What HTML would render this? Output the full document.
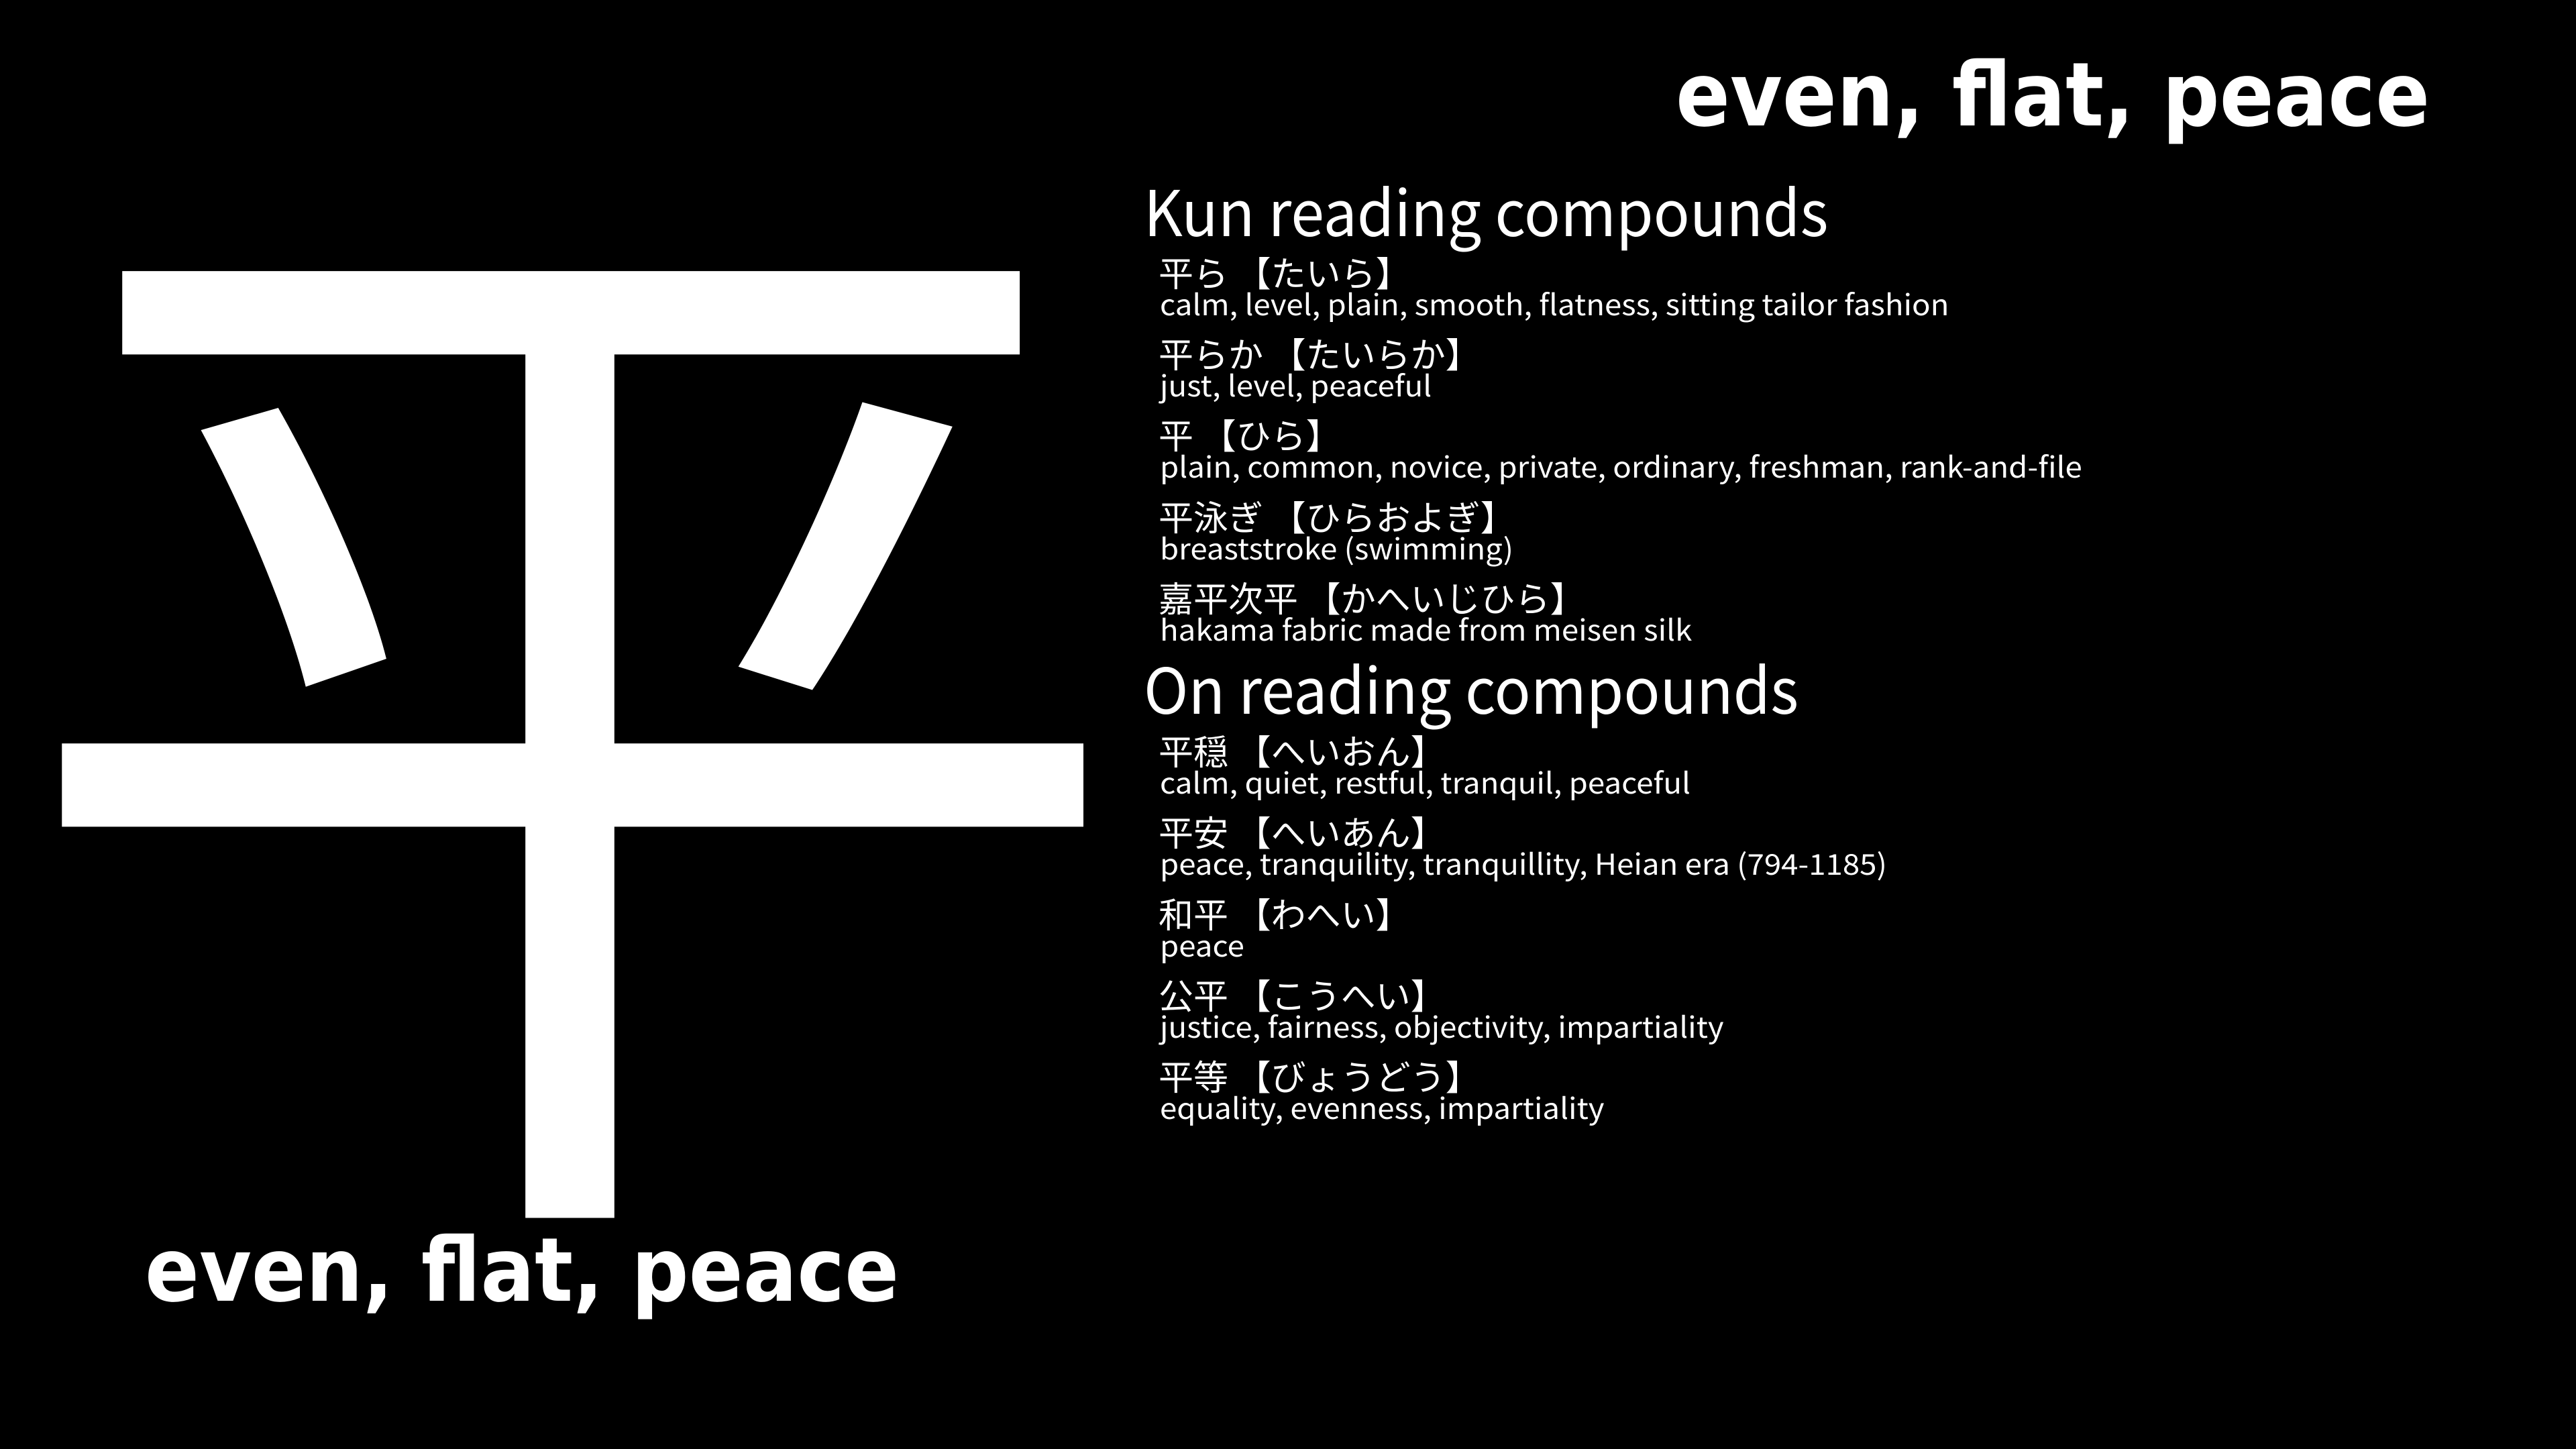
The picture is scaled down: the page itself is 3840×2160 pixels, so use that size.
<!DOCTYPE html>
<html><head><meta charset="utf-8"><style>
html,body{margin:0;padding:0;background:#000;width:3840px;height:2160px;overflow:hidden;position:relative}
div{position:absolute;color:#fff;white-space:nowrap;line-height:1}
.k{font-family:"Noto Sans CJK JP",sans-serif;font-size:1720px;left:4px;top:135px;transform-origin:0 0;transform:scale(0.987,0.963)}
.big{font-family:"DejaVu Sans","Liberation Sans",sans-serif;font-weight:bold;font-size:132px;transform-origin:0 0;transform:scaleX(0.905)}
.h{font-family:"Noto Sans CJK JP",sans-serif;font-size:94px;left:1705px;transform-origin:0 0;transform:scaleX(0.953)}
.j{font-family:"Noto Sans CJK JP",sans-serif;font-size:52px;left:1727px}
.e{font-family:"Noto Sans CJK JP",sans-serif;font-size:43px;left:1729px;transform-origin:0 0;transform:scaleX(1.06)}
</style></head><body>
<div class="k">平</div>
<div class="big" style="left:2498px;top:76px">even, flat, peace</div>
<div class="big" style="left:216px;top:1828px">even, flat, peace</div>

<div class="h" style="top:265px">Kun reading compounds</div>
<div class="j" style="top:379px">平ら 【たいら】</div>
<div class="e" style="top:431px">calm, level, plain, smooth, flatness, sitting tailor fashion</div>
<div class="j" style="top:500px">平らか 【たいらか】</div>
<div class="e" style="top:552px">just, level, peaceful</div>
<div class="j" style="top:621px">平 【ひら】</div>
<div class="e" style="top:673px">plain, common, novice, private, ordinary, freshman, rank-and-file</div>
<div class="j" style="top:743px">平泳ぎ 【ひらおよぎ】</div>
<div class="e" style="top:795px">breaststroke (swimming)</div>
<div class="j" style="top:864px">嘉平次平 【かへいじひら】</div>
<div class="e" style="top:916px">hakama fabric made from meisen silk</div>

<div class="h" style="top:977px">On reading compounds</div>
<div class="j" style="top:1092px">平穏 【へいおん】</div>
<div class="e" style="top:1144px">calm, quiet, restful, tranquil, peaceful</div>
<div class="j" style="top:1213px">平安 【へいあん】</div>
<div class="e" style="top:1265px">peace, tranquility, tranquillity, Heian era (794-1185)</div>
<div class="j" style="top:1335px">和平 【わへい】</div>
<div class="e" style="top:1387px">peace</div>
<div class="j" style="top:1456px">公平 【こうへい】</div>
<div class="e" style="top:1508px">justice, fairness, objectivity, impartiality</div>
<div class="j" style="top:1577px">平等 【びょうどう】</div>
<div class="e" style="top:1629px">equality, evenness, impartiality</div>
</body></html>
